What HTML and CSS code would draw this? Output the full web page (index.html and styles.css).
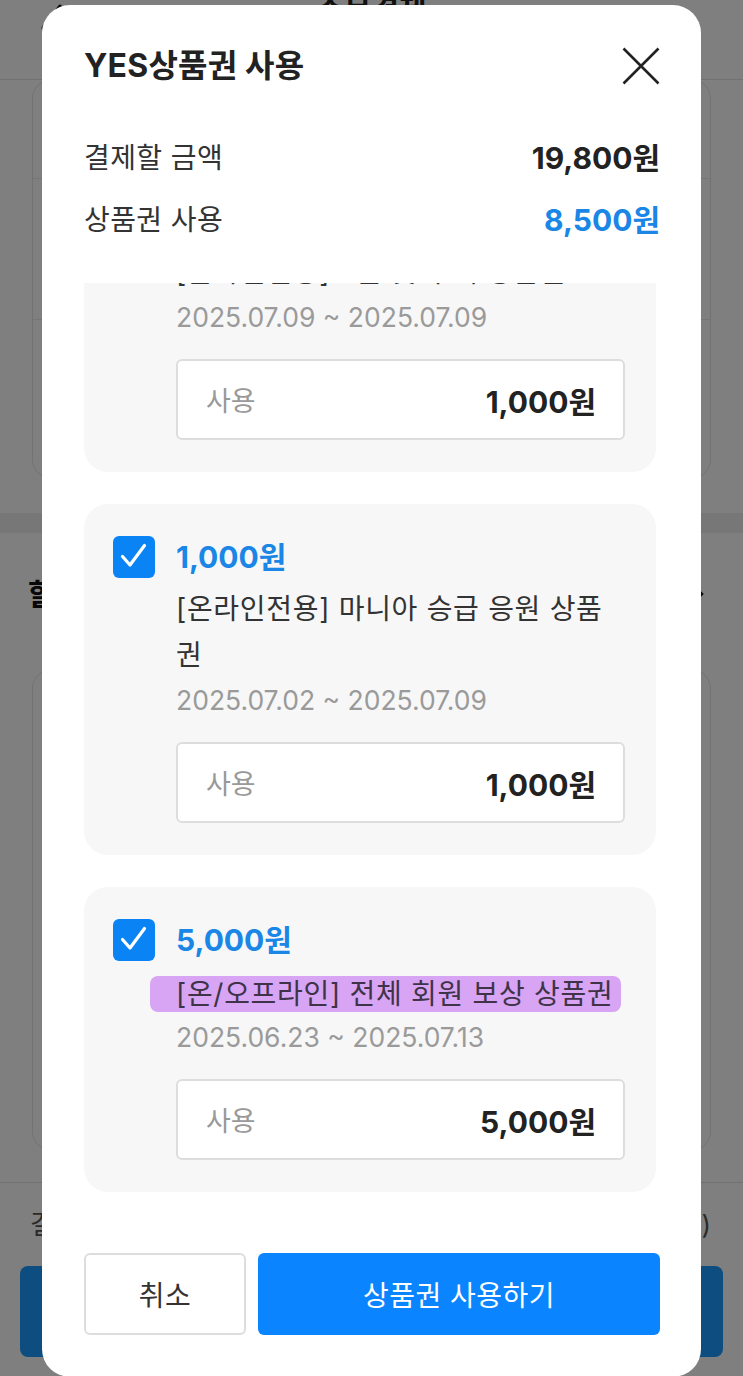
FILE: index.html
```html
<!DOCTYPE html>
<html lang="ko">
<head>
<meta charset="utf-8">
<title>YES상품권 사용</title>
<link rel="stylesheet" href="styles.css">
</head>
<body>
<div class="page">
  <header class="topbar">
    <svg class="back" width="24" height="48" viewBox="0 0 24 48"><path d="M20 2 L3 24 L20 46" fill="none" stroke="#111" stroke-width="3" stroke-linecap="round" stroke-linejoin="round"/></svg>
    <h1 class="page-title">주문결제</h1>
    <span class="topbar-side"></span>
  </header>
  <section class="bgcard">
    <div class="bgrow r1"></div>
    <div class="bgrow r2"></div>
    <div class="bgrow r3"></div>
  </section>
  <div class="band"></div>
  <section class="discount">
    <h2 class="discount-title">할인/포인트</h2>
    <svg class="chev" width="12" height="20" viewBox="0 0 12 20"><path d="M2 2 L10 10 L2 18" fill="none" stroke="#111" stroke-width="2.5"/></svg>
  </section>
  <section class="bgcard2"></section>
  <footer class="paybar">
    <div class="payrow"><span>결제 예정 금액</span><span>(11,300원)</span></div>
    <div class="paybtn">11,300원 결제하기</div>
  </footer>
</div>

<div class="dim"></div>

<div class="modal">
  <div class="modal-head">
    <h3 class="modal-title">YES상품권 사용</h3>
    <svg class="close" width="38" height="38" viewBox="0 0 38 38"><path d="M1.5 1.5 L36.5 36.5 M36.5 1.5 L1.5 36.5" fill="none" stroke="#222" stroke-width="2.6"/></svg>
  </div>
  <div class="summary">
    <div class="sum-row"><span class="sum-label">결제할 금액</span><span class="sum-value">19,800원</span></div>
    <div class="sum-row"><span class="sum-label">상품권 사용</span><span class="sum-value blue">8,500원</span></div>
  </div>
  <div class="list-wrap">
    <div class="list">
      <div class="card">
        <span class="check"><svg width="42" height="42" viewBox="0 0 42 42"><path d="M9.5 20.5 L17 29 L31.5 9.5" fill="none" stroke="#fff" stroke-width="3.2" stroke-linecap="round" stroke-linejoin="round"/></svg></span>
        <div class="card-body">
          <div class="amount">1,000원</div>
          <div class="name">[온라인전용] 7월 첫 구매 상품권</div>
          <div class="date">2025.07.09 ~ 2025.07.09</div>
          <div class="use"><span class="use-label">사용</span><span class="use-value">1,000원</span></div>
        </div>
      </div>
      <div class="card">
        <span class="check"><svg width="42" height="42" viewBox="0 0 42 42"><path d="M9.5 20.5 L17 29 L31.5 9.5" fill="none" stroke="#fff" stroke-width="3.2" stroke-linecap="round" stroke-linejoin="round"/></svg></span>
        <div class="card-body">
          <div class="amount">1,000원</div>
          <div class="name">[온라인전용] 마니아 승급 응원 상품권</div>
          <div class="date">2025.07.02 ~ 2025.07.09</div>
          <div class="use"><span class="use-label">사용</span><span class="use-value">1,000원</span></div>
        </div>
      </div>
      <div class="card">
        <span class="check"><svg width="42" height="42" viewBox="0 0 42 42"><path d="M9.5 20.5 L17 29 L31.5 9.5" fill="none" stroke="#fff" stroke-width="3.2" stroke-linecap="round" stroke-linejoin="round"/></svg></span>
        <div class="card-body">
          <div class="amount">5,000원</div>
          <div class="name"><span class="mark">[온/오프라인] 전체 회원 보상 상품권</span></div>
          <div class="date">2025.06.23 ~ 2025.07.13</div>
          <div class="use"><span class="use-label">사용</span><span class="use-value">5,000원</span></div>
        </div>
      </div>
    </div>
    <div class="scrollbar"></div>
  </div>
  <div class="modal-foot">
    <div class="btn cancel">취소</div>
    <div class="btn primary">상품권 사용하기</div>
  </div>
</div>
</body>
</html>
```
FILE: styles.css
```css
* { box-sizing: border-box; margin: 0; padding: 0; }
html, body { width: 743px; height: 1376px; overflow: hidden; }
body {
  font-family: "Inter", "Noto Sans CJK KR", sans-serif;
  background: #fff;
  color: #222;
  position: relative;
}

/* ---------- background page ---------- */
.page { width: 743px; }
.topbar {
  height: 80px;
  border-bottom: 1px solid #e2e2e2;
  display: grid;
  grid-template-columns: 1fr auto 1fr;
  align-items: start;
}
.back { margin-left: 40px; margin-top: 4px; }
.page-title { font-size: 30px; font-weight: 700; line-height: 30px; margin-top: -6px; }
.bgcard {
  margin: 0 32px;
  height: 398px;
  border: 1px solid #e4e4e4;
  border-radius: 18px;
  display: flex;
  flex-direction: column;
}
.bgrow.r1 { height: 97px; }
.bgrow.r2 { height: 141px; border-top: 1px solid #ececec; }
.bgrow.r3 { flex: 1; border-top: 1px solid #ececec; }
.band { margin-top: 35px; height: 20px; background: #eeeeee; }
.discount {
  margin-top: 44px;
  padding: 0 39px 0 28px;
  display: flex;
  justify-content: space-between;
  align-items: center;
  height: 34px;
}
.discount-title { font-size: 30px; font-weight: 700; line-height: 34px; color: #111; }
.bgcard2 {
  margin: 59px 32px 0;
  height: 480px;
  border: 1px solid #e4e4e4;
  border-radius: 18px;
}
.paybar { margin-top: 32px; border-top: 1px solid #e2e2e2; padding: 18px 20px 0; }
.payrow {
  display: flex;
  justify-content: space-between;
  padding: 0 12px 0 10px;
  font-size: 26px;
  line-height: 48px;
  color: #555;
}
.paybtn {
  margin-top: 17px;
  height: 91px;
  border-radius: 8px;
  background: #1a9bff;
  color: #fff;
  font-size: 28px;
  display: flex;
  align-items: center;
  justify-content: center;
}

/* ---------- dim overlay ---------- */
.dim { position: fixed; inset: 0; background: rgba(0, 0, 0, 0.5); }

/* ---------- modal ---------- */
.modal {
  position: fixed;
  left: 42px;
  top: 5px;
  width: 659px;
  height: 1372px;
  background: #fff;
  border-radius: 28px;
  padding: 41px 41px 42px 42px;
  display: flex;
  flex-direction: column;
}
.modal-head {
  height: 40px;
  display: flex;
  justify-content: space-between;
  align-items: center;
}
.modal-title { font-size: 32px; font-weight: 700; line-height: 40px; color: #222; letter-spacing: 0.2px; }
.close { display: block; }

.summary { margin-top: 52px; display: flex; flex-direction: column; gap: 22px; }
.sum-row { display: flex; justify-content: space-between; align-items: center; line-height: 40px; }
.sum-label { font-size: 28px; color: #333; letter-spacing: 0.4px; }
.sum-value { font-size: 30px; font-weight: 700; color: #222; }
.sum-value.blue { color: #1a86e6; }

.list-wrap { margin-top: 43px; height: 938px; overflow: hidden; position: relative; }
.list { margin-top: -116px; padding-right: 4px; display: flex; flex-direction: column; gap: 32px; }
.card {
  background: #f7f7f7;
  border-radius: 24px;
  padding: 32px 31px 32px 29px;
  display: grid;
  grid-template-columns: 42px 1fr;
  column-gap: 21px;
  align-items: start;
}
.check {
  width: 42px;
  height: 42px;
  border-radius: 6px;
  background: #0a84f5;
  display: block;
}
.check svg { display: block; }
.amount { font-size: 30px; font-weight: 700; line-height: 42px; color: #1a86e6; }
.name { margin-top: 8px; font-size: 28px; line-height: 46px; color: #333; letter-spacing: 0.7px; }
.mark {
  display: inline-block;
  line-height: 36px;
  padding: 0 8px 0 26px;
  margin-left: -26px;
  border-radius: 8px;
  background: #d8a4f4;
  color: #3f3348;
  vertical-align: middle;
}
.date { font-size: 26.5px; line-height: 44px; color: #9a9a9a; }
.use {
  margin-top: 20px;
  height: 81px;
  background: #fff;
  border: 2px solid #dddddd;
  border-radius: 6px;
  display: flex;
  justify-content: space-between;
  align-items: center;
  padding: 0 27px 0 28px;
}
.use-label { font-size: 27px; color: #999; }
.use-value { font-size: 30px; font-weight: 700; color: #222; }

.scrollbar {
  position: absolute;
  left: 593px;
  top: 260px;
  width: 4px;
  height: 492px;
  border-radius: 2px;
  background: #8c8c8c;
}

.modal-foot {
  margin-top: 32px;
  height: 82px;
  display: grid;
  grid-template-columns: 162px 1fr;
  gap: 12px;
}
.btn {
  border-radius: 6px;
  font-size: 28px;
  letter-spacing: 0.5px;
  display: flex;
  align-items: center;
  justify-content: center;
}
.btn.cancel { background: #fff; border: 2px solid #dddddd; color: #333; }
.btn.primary { background: #0a84ff; color: #fff; }
```
